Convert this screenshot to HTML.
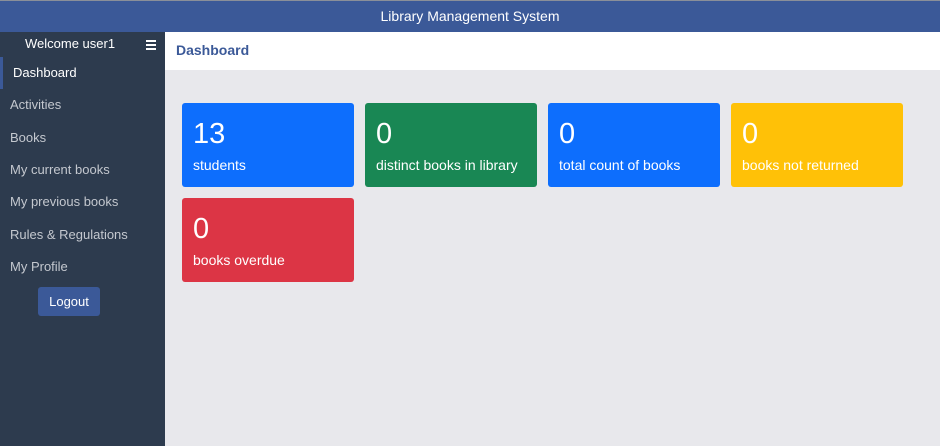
<!DOCTYPE html>
<html><head><style>
*{margin:0;padding:0;box-sizing:border-box}
body{width:940px;height:446px;overflow:hidden;font-family:"Liberation Sans",sans-serif;background:#e8e8ec;position:relative}
.hdr{position:absolute;left:0;top:0;width:940px;height:32px;background:#3b5998;border-top:1px solid #8a8f99;color:#fff;font-size:14px;text-align:center;line-height:31px}
.side{position:absolute;left:0;top:32px;width:165px;height:414px;background:#2d3b4e}
.welcome{position:absolute;left:25px;top:4px;color:#fff;font-size:13px}
.ham{position:absolute;left:146px;top:8px;width:10px}
.ham i{display:block;height:2px;background:#fff;margin-bottom:2px}
.item{position:absolute;left:10px;color:#c4c8cf;font-size:13px}
.act{position:absolute;left:0;top:25px;width:3px;height:32px;background:#3b5998}
.logout{position:absolute;left:38px;top:255px;width:62px;height:29px;background:#3b5998;border-radius:3px;color:#fff;font-size:13px;text-align:center;line-height:29px}
.top{position:absolute;left:165px;top:32px;width:775px;height:38px;background:#fff;color:#3b5998;font-size:14px;padding:10px 0 0 11px;font-weight:bold}
.card{position:absolute;width:172px;height:84px;border-radius:3px;color:#fff}
.card .n{position:absolute;left:11px;top:15px;font-size:29px}
.card .l{position:absolute;left:11px;top:54px;font-size:14px}
</style></head><body>
<div class="hdr">Library Management System</div>
<div class="side">
<div class="welcome">Welcome user1</div>
<div class="ham"><i></i><i></i><i></i></div>
<div class="act"></div>
<div class="item" style="left:13px;top:33px;color:#fff">Dashboard</div>
<div class="item" style="top:65px">Activities</div>
<div class="item" style="top:98px">Books</div>
<div class="item" style="top:130px">My current books</div>
<div class="item" style="top:162px">My previous books</div>
<div class="item" style="top:195px">Rules &amp; Regulations</div>
<div class="item" style="top:227px">My Profile</div>
<div class="logout">Logout</div>
</div>
<div class="top">Dashboard</div>
<div class="card" style="left:182px;top:103px;background:#0d6efd"><div class="n">13</div><div class="l">students</div></div>
<div class="card" style="left:365px;top:103px;background:#198754"><div class="n">0</div><div class="l">distinct books in library</div></div>
<div class="card" style="left:548px;top:103px;background:#0d6efd"><div class="n">0</div><div class="l">total count of books</div></div>
<div class="card" style="left:731px;top:103px;background:#ffc107"><div class="n">0</div><div class="l">books not returned</div></div>
<div class="card" style="left:182px;top:198px;background:#dc3545"><div class="n">0</div><div class="l">books overdue</div></div>
</body></html>
